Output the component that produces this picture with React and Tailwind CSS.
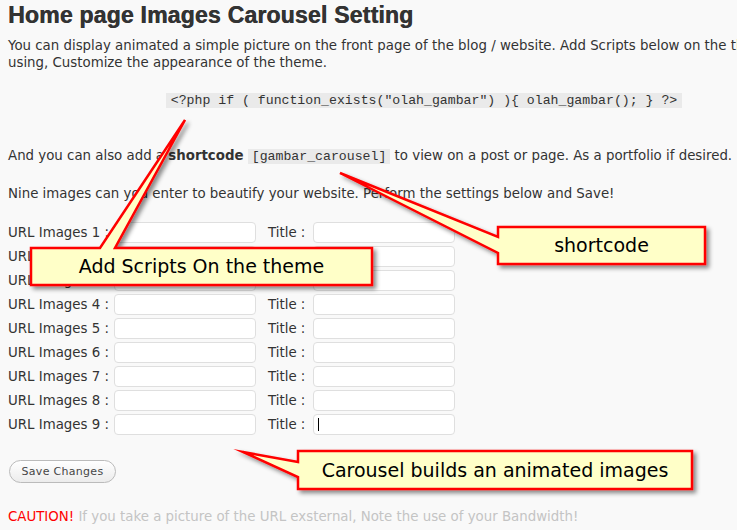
import React from "react";

const rows = [1, 2, 3, 4, 5, 6, 7, 8, 9];

function Row({ n }) {
  return (
    <div className="flex items-center h-[21px]">
      <span className="w-[106px] whitespace-nowrap">URL Images {n} :</span>
      <input
        type="text"
        className="w-[142px] h-[21px] bg-white border border-[#dfdfdf] rounded-[4px] outline-none"
      />
      <span className="ml-[12px] w-[45px] whitespace-nowrap">Title :</span>
      <span className="relative block">
        <input
          type="text"
          className="block w-[142px] h-[21px] bg-white border border-[#dfdfdf] rounded-[4px] outline-none"
        />
        {n === 9 && (
          <span className="absolute left-[5px] top-[4px] w-px h-[13px] bg-black" />
        )}
      </span>
    </div>
  );
}

export default function App() {
  return (
    <div className="relative w-[737px] h-[530px] overflow-hidden bg-[#f9f9f9]">
      <div className="w-[848px] px-2 text-[13.35px] leading-[17px] text-[#333] font-['DejaVu_Sans',Verdana,sans-serif]">
        <h2 className="mt-[2px] font-['Liberation_Sans',Arial,sans-serif] font-bold text-[23px] leading-[26px] tracking-[0.2px] text-[#333] [text-shadow:0.5px_0_0_#333]">
          Home page Images Carousel Setting
        </h2>
        <p className="mt-[9px]">
          <span className="whitespace-nowrap">
            You can display animated a simple picture on the front page of the blog / website. Add Scripts below on the theme you are
          </span>
          <br />
          using, Customize the appearance of the theme.
        </p>
        <div className="mt-[22px] text-center font-['Liberation_Mono',monospace] text-[13.2px] leading-[15px]">
          <code className="inline-block bg-[#eaeaea] px-[5px] font-['Liberation_Mono',monospace] text-[13.2px] leading-[15px] whitespace-pre">
            {'<?php if ( function_exists("olah_gambar") ){ olah_gambar(); } ?>'}
          </code>
        </div>
        <p className="mt-[39px] whitespace-nowrap">
          And you can also add a <b className="font-bold">shortcode</b>{" "}
          <code className="bg-[#eaeaea] px-[4px] font-['Liberation_Mono',monospace] text-[13.2px]">
            [gambar_carousel]
          </code>{" "}
          to view on a post or page. As a portfolio if desired.
        </p>
        <p className="mt-[20px]">
          Nine images can you enter to beautify your website. Perform the settings below and Save!
        </p>
        <div className="mt-[20px] flex flex-col gap-[3px]">
          {rows.map((n) => (
            <Row key={n} n={n} />
          ))}
        </div>
        <button className="block mt-[25px] ml-[1px] h-[23px] w-[107px] rounded-full border border-[#bbbbbb] bg-linear-to-b from-white to-[#ececec] text-[11px] leading-[21px] text-[#464646] tracking-[0.3px] font-['DejaVu_Sans',Verdana,sans-serif]">
          Save Changes
        </button>
        <p className="mt-[25px] whitespace-nowrap">
          <span className="text-[#ff0000]">CAUTION!</span>{" "}
          <span className="text-[#c4c4c4]">
            If you take a picture of the URL exsternal, Note the use of your Bandwidth!
          </span>
        </p>
      </div>

      <svg
        className="absolute left-0 top-0 pointer-events-none"
        width="737"
        height="530"
        viewBox="0 0 737 530"
      >
        <defs>
          <filter id="sh" x="-20%" y="-20%" width="140%" height="160%">
            <feDropShadow dx="3" dy="3" stdDeviation="2" floodColor="#000" floodOpacity="0.45" />
          </filter>
        </defs>
        <path
          d="M31,248 L100,248 L185,120 L115,248 L372,248 L372,285 L31,285 Z"
          fill="#ffffc8"
          stroke="#ff0000"
          strokeWidth="2.5"
          strokeMiterlimit="12"
          filter="url(#sh)"
        />
        <path
          d="M498,227 L705,227 L705,264 L498,264 L498,253 L340,173 L498,237 Z"
          fill="#ffffc8"
          stroke="#ff0000"
          strokeWidth="2.5"
          strokeMiterlimit="12"
          filter="url(#sh)"
        />
        <path
          d="M298,451 L692,451 L692,489 L298,489 L298,477 L243,452 L298,462 Z"
          fill="#ffffc8"
          stroke="#ff0000"
          strokeWidth="2.5"
          strokeMiterlimit="12"
          filter="url(#sh)"
        />
      </svg>

      <div className="absolute left-[31px] top-[248px] w-[341px] h-[37px] flex items-center justify-center text-[19px] leading-none text-black font-['DejaVu_Sans',Verdana,sans-serif]">
        Add Scripts On the theme
      </div>
      <div className="absolute left-[498px] top-[227px] w-[207px] h-[37px] flex items-center justify-center text-[19px] leading-none text-black font-['DejaVu_Sans',Verdana,sans-serif]">
        shortcode
      </div>
      <div className="absolute left-[298px] top-[451px] w-[394px] h-[38px] flex items-center justify-center text-[19px] leading-none text-black font-['DejaVu_Sans',Verdana,sans-serif]">
        Carousel builds an animated images
      </div>
    </div>
  );
}
